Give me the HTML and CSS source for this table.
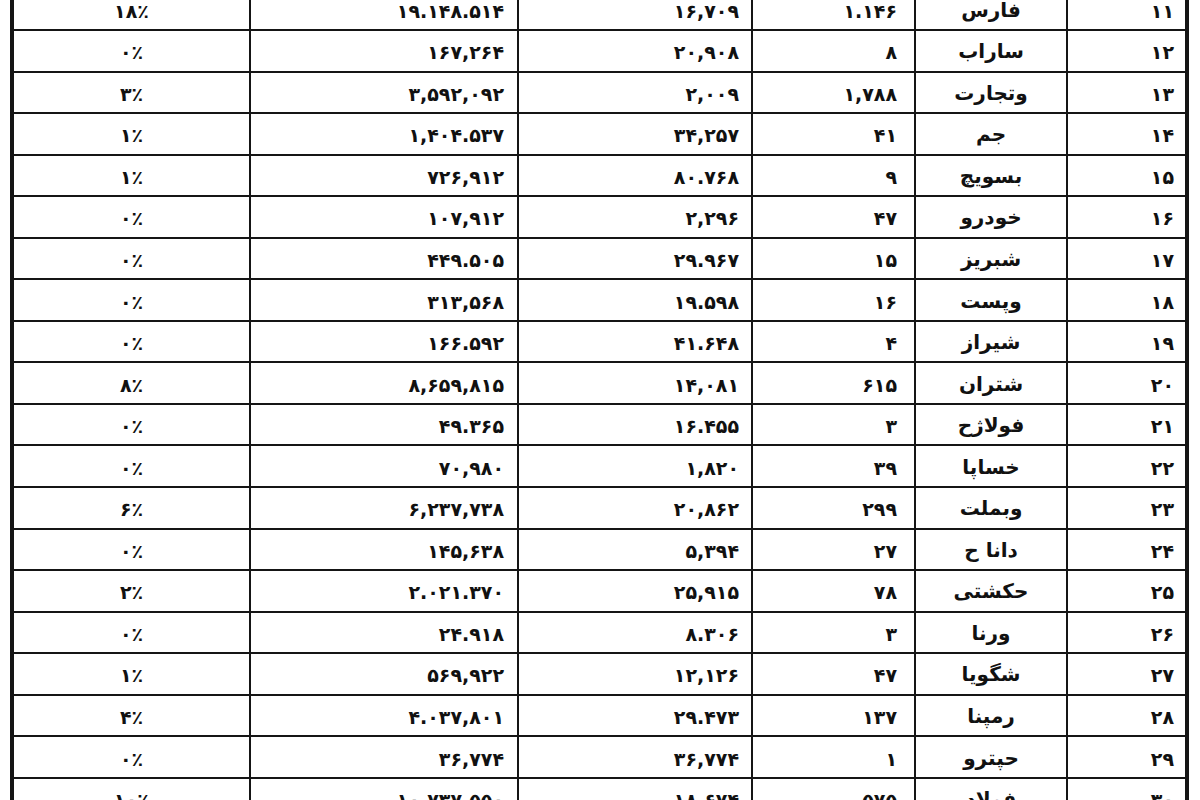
FILE: index.html
```html
<!DOCTYPE html>
<html lang="fa" dir="rtl">
<head>
<meta charset="utf-8">
<title>جدول</title>
<link rel="stylesheet" href="styles.css">
</head>
<body>
<div class="sheet">
  <div class="row"><div class="cell idx">۱۱</div><div class="cell name">فارس</div><div class="cell cnt">۱.۱۴۶</div><div class="cell val">۱۶,۷۰۹</div><div class="cell tot">۱۹.۱۴۸.۵۱۴</div><div class="cell pct">۱۸٪</div></div>
  <div class="row"><div class="cell idx">۱۲</div><div class="cell name">ساراب</div><div class="cell cnt">۸</div><div class="cell val">۲۰,۹۰۸</div><div class="cell tot">۱۶۷,۲۶۴</div><div class="cell pct">۰٪</div></div>
  <div class="row"><div class="cell idx">۱۳</div><div class="cell name">وتجارت</div><div class="cell cnt">۱,۷۸۸</div><div class="cell val">۲,۰۰۹</div><div class="cell tot">۳,۵۹۲,۰۹۲</div><div class="cell pct">۳٪</div></div>
  <div class="row"><div class="cell idx">۱۴</div><div class="cell name">جم</div><div class="cell cnt">۴۱</div><div class="cell val">۳۴,۲۵۷</div><div class="cell tot">۱,۴۰۴.۵۳۷</div><div class="cell pct">۱٪</div></div>
  <div class="row"><div class="cell idx">۱۵</div><div class="cell name">بسویچ</div><div class="cell cnt">۹</div><div class="cell val">۸۰.۷۶۸</div><div class="cell tot">۷۲۶,۹۱۲</div><div class="cell pct">۱٪</div></div>
  <div class="row"><div class="cell idx">۱۶</div><div class="cell name">خودرو</div><div class="cell cnt">۴۷</div><div class="cell val">۲,۲۹۶</div><div class="cell tot">۱۰۷,۹۱۲</div><div class="cell pct">۰٪</div></div>
  <div class="row"><div class="cell idx">۱۷</div><div class="cell name">شبریز</div><div class="cell cnt">۱۵</div><div class="cell val">۲۹.۹۶۷</div><div class="cell tot">۴۴۹.۵۰۵</div><div class="cell pct">۰٪</div></div>
  <div class="row"><div class="cell idx">۱۸</div><div class="cell name">وپست</div><div class="cell cnt">۱۶</div><div class="cell val">۱۹.۵۹۸</div><div class="cell tot">۳۱۳,۵۶۸</div><div class="cell pct">۰٪</div></div>
  <div class="row"><div class="cell idx">۱۹</div><div class="cell name">شیراز</div><div class="cell cnt">۴</div><div class="cell val">۴۱.۶۴۸</div><div class="cell tot">۱۶۶.۵۹۲</div><div class="cell pct">۰٪</div></div>
  <div class="row"><div class="cell idx">۲۰</div><div class="cell name">شتران</div><div class="cell cnt">۶۱۵</div><div class="cell val">۱۴,۰۸۱</div><div class="cell tot">۸,۶۵۹,۸۱۵</div><div class="cell pct">۸٪</div></div>
  <div class="row"><div class="cell idx">۲۱</div><div class="cell name">فولاژح</div><div class="cell cnt">۳</div><div class="cell val">۱۶.۴۵۵</div><div class="cell tot">۴۹.۳۶۵</div><div class="cell pct">۰٪</div></div>
  <div class="row"><div class="cell idx">۲۲</div><div class="cell name">خساپا</div><div class="cell cnt">۳۹</div><div class="cell val">۱,۸۲۰</div><div class="cell tot">۷۰,۹۸۰</div><div class="cell pct">۰٪</div></div>
  <div class="row"><div class="cell idx">۲۳</div><div class="cell name">وبملت</div><div class="cell cnt">۲۹۹</div><div class="cell val">۲۰,۸۶۲</div><div class="cell tot">۶,۲۳۷,۷۳۸</div><div class="cell pct">۶٪</div></div>
  <div class="row"><div class="cell idx">۲۴</div><div class="cell name">دانا ح</div><div class="cell cnt">۲۷</div><div class="cell val">۵,۳۹۴</div><div class="cell tot">۱۴۵,۶۳۸</div><div class="cell pct">۰٪</div></div>
  <div class="row"><div class="cell idx">۲۵</div><div class="cell name">حکشتی</div><div class="cell cnt">۷۸</div><div class="cell val">۲۵,۹۱۵</div><div class="cell tot">۲.۰۲۱.۳۷۰</div><div class="cell pct">۲٪</div></div>
  <div class="row"><div class="cell idx">۲۶</div><div class="cell name">ورنا</div><div class="cell cnt">۳</div><div class="cell val">۸.۳۰۶</div><div class="cell tot">۲۴.۹۱۸</div><div class="cell pct">۰٪</div></div>
  <div class="row"><div class="cell idx">۲۷</div><div class="cell name">شگویا</div><div class="cell cnt">۴۷</div><div class="cell val">۱۲,۱۲۶</div><div class="cell tot">۵۶۹,۹۲۲</div><div class="cell pct">۱٪</div></div>
  <div class="row"><div class="cell idx">۲۸</div><div class="cell name">رمپنا</div><div class="cell cnt">۱۳۷</div><div class="cell val">۲۹.۴۷۳</div><div class="cell tot">۴.۰۳۷,۸۰۱</div><div class="cell pct">۴٪</div></div>
  <div class="row"><div class="cell idx">۲۹</div><div class="cell name">حپترو</div><div class="cell cnt">۱</div><div class="cell val">۳۶,۷۷۴</div><div class="cell tot">۳۶,۷۷۴</div><div class="cell pct">۰٪</div></div>
  <div class="row"><div class="cell idx">۳۰</div><div class="cell name">فولاد</div><div class="cell cnt">۵۷۵</div><div class="cell val">۱۸,۶۷۴</div><div class="cell tot">۱۰,۷۳۷,۵۵۰</div><div class="cell pct">۱۰٪</div></div>
</div>
</body>
</html>
```
FILE: styles.css
```css
html { overflow: hidden; }
body {
  margin: 0;
  background: #fff;
  font-family: "DejaVu Sans", sans-serif;
  color: #111;
}
.sheet {
  direction: rtl;
  box-sizing: border-box;
  width: 1179px;
  margin: -10.56px auto 0 10px;
  padding: 0 4px;
  background: #151515;
  display: flex;
  flex-direction: column;
  gap: 2px;
}
.row {
  display: grid;
  grid-template-columns: 117px 150px 161px 232px 266px 235px;
  column-gap: 2px;
  height: 39.56px;
}
.cell {
  background: #fff;
  display: flex;
  align-items: center;
  justify-content: flex-start;
  box-sizing: border-box;
  padding-top: 3px;
  font-size: 19px;
  letter-spacing: 1.1px;
  font-weight: bold;
  white-space: nowrap;
}
.idx { padding-right: 11px; }
.name { justify-content: center; font-size: 20px; letter-spacing: 0; padding-top: 1px; }
.cnt { padding-right: 17px; }
.val { padding-right: 12px; }
.tot { padding-right: 13px; }
.pct { justify-content: center; }
```
